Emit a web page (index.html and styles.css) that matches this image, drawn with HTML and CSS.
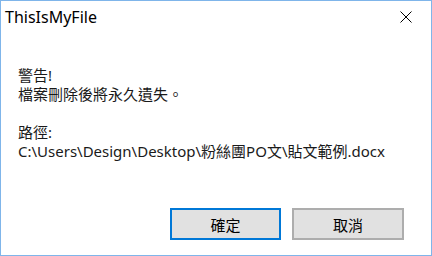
FILE: index.html
```html
<!DOCTYPE html>
<html lang="zh-Hant">
<head>
    <meta charset="UTF-8">
    <title>ThisIsMyFile</title>
    <link rel="stylesheet" href="styles.css">
</head>
<body>
    <div class="window">
        <div class="titlebar">
            <span class="title">ThisIsMyFile</span>
            <span class="close">
                <svg width="12" height="12" viewBox="0 0 12 12">
                    <path d="M0.5 0.5 L11.5 11.5 M11.5 0.5 L0.5 11.5" stroke="#000" stroke-width="1" fill="none"/>
                </svg>
            </span>
        </div>
        <div class="content">
            <p>警告!</p>
            <p>檔案刪除後將永久遺失。</p>
            <p class="blank">&nbsp;</p>
            <p>路徑:</p>
            <p>C:\Users\Design\Desktop\粉絲團PO文\貼文範例.docx</p>
        </div>
        <div class="buttons">
            <button class="btn btn-default">確定</button>
            <button class="btn">取消</button>
        </div>
    </div>
</body>
</html>
```

FILE: styles.css
```css
html, body { margin: 0; padding: 0; background: #fff; }
.window { width: 432px; height: 256px; box-sizing: border-box; border: 1px solid #7fb5ea; background: #fff; display: flex; flex-direction: column; font-family: "Noto Sans", "Noto Sans CJK TC", sans-serif; color: #000; }
.titlebar { height: 31px; display: flex; align-items: center; justify-content: space-between; padding-left: 4px; }
.title { font-size: 16px; }
.close { width: 46px; height: 31px; display: flex; align-items: center; justify-content: center; margin-right: 2px; }
.content { padding: 34px 17px 0; font-size: 15px; line-height: 19px; color: #1a1a1a; }
.content p { margin: 0; }
.buttons { margin-top: auto; display: flex; justify-content: flex-end; gap: 11px; padding: 0 27px 15px 0; }
.btn { width: 112px; height: 32px; box-sizing: border-box; background: #e1e1e1; border: 2px solid #adadad; font-family: "Noto Sans CJK TC", sans-serif; font-size: 15px; color: #000; padding: 0; }
.btn-default { border-color: #0078d7; width: 111px; }
```
